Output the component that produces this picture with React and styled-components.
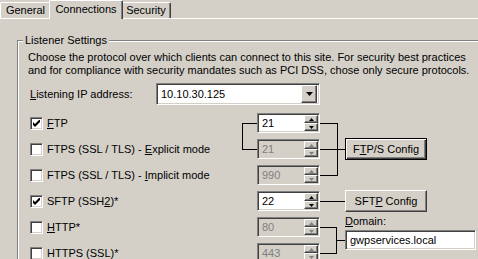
import React from "react"
import styled, { createGlobalStyle } from "styled-components"

const Global = createGlobalStyle`
  html, body {
    margin: 0;
    background: #d4d0c8;
    overflow: hidden;
  }
  body {
    font-family: "Liberation Sans", Arial, sans-serif;
    font-size: 11px;
    color: #000;
  }
`

const sunken = `
  border: 1px solid;
  border-color: #808080 #ffffff #ffffff #808080;
  box-shadow: inset 1px 1px 0 #404040, inset -1px -1px 0 #d4d0c8;
`

const raised = `
  border: 1px solid;
  border-color: #ffffff #404040 #404040 #ffffff;
  box-shadow: inset -1px -1px 0 #808080, inset 1px 1px 0 #d4d0c8;
  background: #d4d0c8;
`

function Check() {
  return (
    <svg width="7" height="7" viewBox="0 0 7 7">
      <path d="M0 2v3l2 2 5-5V-1L2 4z" fill="#000" />
    </svg>
  )
}

function Tri({ up, color = "#000", w = 5 }) {
  const h = Math.ceil(w / 2)
  return (
    <svg width={w} height={h} viewBox={`0 0 ${w} ${h}`}>
      <path d={up ? `M0 ${h}L${w / 2} 0L${w} ${h}z` : `M0 0L${w} 0L${w / 2} ${h}z`} fill={color} />
    </svg>
  )
}

function Spin({ value, disabled }) {
  const c = disabled ? "#808080" : "#000"
  return (
    <SpinBox $disabled={disabled}>
      <SpinValue>{value}</SpinValue>
      <SpinButtons>
        <SpinButton><Tri up color={c} /></SpinButton>
        <SpinButton><Tri color={c} /></SpinButton>
      </SpinButtons>
    </SpinBox>
  )
}

function Option({ checked, children }) {
  return (
    <OptionCell>
      <Box>{checked && <Check />}</Box>
      <span>{children}</span>
    </OptionCell>
  )
}

export default function App() {
  return (
    <>
      <Global />
      <Window>
        <TabStrip>
          <Tab $w={51}>General</Tab>
          <Tab $w={74} $active>Connections</Tab>
          <Tab $w={50}>Security</Tab>
        </TabStrip>
        <Page>
          <Group>
            <Legend>Listener Settings</Legend>
            <Description>
              Choose the protocol over which clients can connect to this site. For security best practices
              <br />
              and for compliance with security mandates such as PCI DSS, chose only secure protocols.
            </Description>
            <IpRow>
              <IpLabel><u>L</u>istening IP address:</IpLabel>
              <Combo>
                <ComboText>10.10.30.125</ComboText>
                <DropButton><Tri w={7} /></DropButton>
              </Combo>
            </IpRow>
            <Protocols>
              <Connectors width="450" height="160">
                <g stroke="#000" strokeWidth="1" fill="none" shapeRendering="crispEdges">
                  <path d="M214 13.5H229M214 39.5H229M214.5 13V40" />
                  <path d="M292 13.5H309.5M292 39.5H317M292 65.5H309.5M309.5 13V66" />
                  <path d="M292 91.5H317" />
                  <path d="M292 117.5H308.5M292 143.5H308.5M308.5 117V144M308 130.5H317" />
                </g>
              </Connectors>

              <Option checked><u>F</u>TP</Option>
              <SpinCell><Spin value="21" /></SpinCell>

              <Option>FTPS (SSL / TLS) - <u>E</u>xplicit mode</Option>
              <SpinCell><Spin value="21" disabled /></SpinCell>
              <ActionCell><Button $default><span>F<u>T</u>P/S Config</span></Button></ActionCell>

              <Option>FTPS (SSL / TLS) - <u>I</u>mplicit mode</Option>
              <SpinCell><Spin value="990" disabled /></SpinCell>

              <Option checked>SFTP (SSH<u>2</u>)*</Option>
              <SpinCell><Spin value="22" /></SpinCell>
              <ActionCell><Button><span>SFT<u>P</u> Config</span></Button></ActionCell>

              <Option><u>H</u>TTP*</Option>
              <SpinCell><Spin value="80" disabled /></SpinCell>
              <DomainCell>
                <DomainLabel><u>D</u>omain:</DomainLabel>
                <TextInput>gwpservices.local</TextInput>
              </DomainCell>

              <Option>HTTPS (SSL)*</Option>
              <SpinCell><Spin value="443" disabled /></SpinCell>
            </Protocols>
          </Group>
        </Page>
      </Window>
    </>
  )
}

const Window = styled.div`
  width: 478px;
  height: 259px;
  overflow: hidden;
`

const TabStrip = styled.div`
  display: flex;
  align-items: flex-end;
  height: 18px;
`

const Tab = styled.div`
  position: relative;
  box-sizing: border-box;
  width: ${(p) => p.$w}px;
  height: ${(p) => (p.$active ? 19 : 16)}px;
  margin: ${(p) => (p.$active ? "0 -2px -1px -2px" : "0")};
  z-index: ${(p) => (p.$active ? 1 : 0)};
  padding-top: ${(p) => (p.$active ? 2 : 1)}px;
  text-align: center;
  line-height: 13px;
  background: #d4d0c8;
  border-top: 1px solid #fff;
  border-left: 1px solid #fff;
  border-right: 1px solid #404040;
  box-shadow: inset -1px 0 0 #808080;
  border-radius: 2px 2px 0 0;
`

const Page = styled.div`
  border-top: 1px solid #fff;
  padding: 15px 0 0 17px;
`

const Group = styled.fieldset`
  margin: 0;
  width: 520px;
  height: 300px;
  box-sizing: border-box;
  padding: 4px 0 0 10px;
  border: 1px solid #808080;
  box-shadow: inset 1px 1px 0 #fff, 1px 1px 0 #fff;
`

const Legend = styled.legend`
  padding: 0 2px;
  margin-left: -5px;
  line-height: 13px;
  background: #d4d0c8;
`

const Description = styled.div`
  line-height: 13px;
  white-space: nowrap;
`

const IpRow = styled.div`
  display: flex;
  align-items: center;
  margin-top: 6px;
  padding-left: 2px;
`

const IpLabel = styled.div`
  width: 126px;
`

const Combo = styled.div`
  ${sunken}
  box-sizing: border-box;
  width: 164px;
  height: 22px;
  background: #fff;
  display: flex;
  align-items: center;
  padding: 1px 2px 1px 4px;
`

const ComboText = styled.div`
  flex: 1;
`

const DropButton = styled.div`
  ${raised}
  box-sizing: border-box;
  width: 16px;
  height: 18px;
  display: flex;
  align-items: center;
  justify-content: center;
`

const Protocols = styled.div`
  position: relative;
  display: grid;
  grid-template-columns: 214px 15px 63px 25px 1fr;
  grid-auto-rows: 26px;
  margin-top: 5px;
`

const Connectors = styled.svg`
  position: absolute;
  left: 0;
  top: 0;
  pointer-events: none;
`

const OptionCell = styled.div`
  grid-column: 1;
  display: flex;
  align-items: center;
  gap: 4px;
  padding-left: 2px;
`

const Box = styled.div`
  ${sunken}
  box-sizing: border-box;
  width: 13px;
  height: 13px;
  background: #fff;
  display: flex;
  align-items: center;
  justify-content: center;
`

const SpinCell = styled.div`
  grid-column: 3;
  display: flex;
  align-items: center;
`

const SpinBox = styled.div`
  ${sunken}
  box-sizing: border-box;
  width: 63px;
  height: 20px;
  padding: 1px;
  display: flex;
  background: ${(p) => (p.$disabled ? "#d4d0c8" : "#fff")};
  color: ${(p) => (p.$disabled ? "#808080" : "#000")};
`

const SpinValue = styled.div`
  flex: 1;
  padding-left: 3px;
  line-height: 16px;
`

const SpinButtons = styled.div`
  display: flex;
  flex-direction: column;
  width: 14px;
`

const SpinButton = styled.div`
  ${raised}
  box-sizing: border-box;
  height: 8px;
  display: flex;
  align-items: center;
  justify-content: center;
`

const ActionCell = styled.div`
  grid-column: 5;
  display: flex;
  align-items: center;
`

const Button = styled.div`
  ${raised}
  box-sizing: border-box;
  width: 82px;
  height: 22px;
  display: flex;
  align-items: center;
  justify-content: center;
  ${(p) =>
    p.$default &&
    `
    border-color: #000;
    box-shadow: inset 1px 1px 0 #fff, inset -1px -1px 0 #404040, inset -2px -2px 0 #808080;
  `}
`

const DomainCell = styled.div`
  grid-column: 5;
  grid-row: 5 / span 2;
  display: flex;
  flex-direction: column;
  padding-top: 1px;
  gap: 2px;
`

const DomainLabel = styled.div`
  line-height: 13px;
`

const TextInput = styled.div`
  ${sunken}
  box-sizing: border-box;
  width: 131px;
  height: 20px;
  background: #fff;
  padding-left: 4px;
  line-height: 18px;
`
